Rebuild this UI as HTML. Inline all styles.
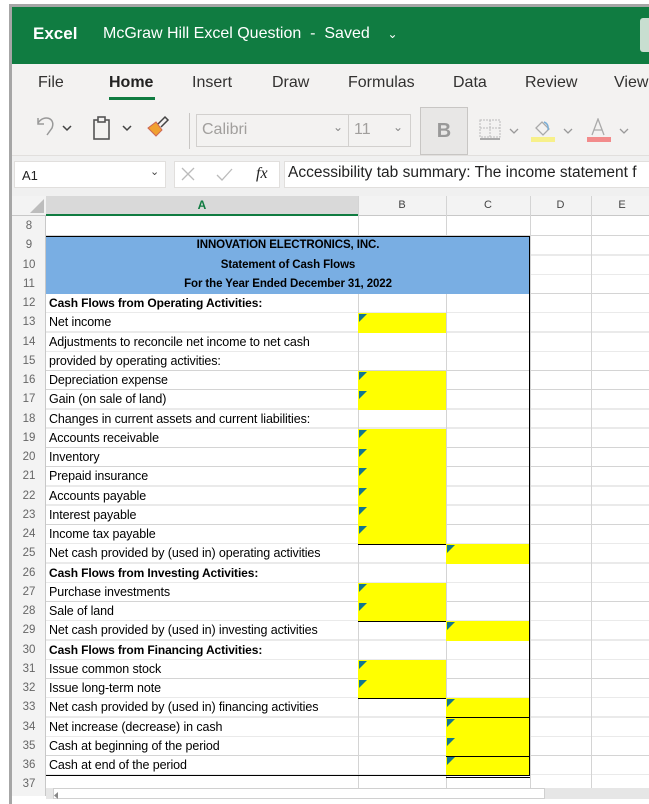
<!DOCTYPE html>
<html><head><meta charset="utf-8"><style>
*{margin:0;padding:0;box-sizing:border-box}
body{width:649px;height:799px;overflow:hidden;background:#fff;position:relative;font-family:"Liberation Sans",sans-serif}
.a{position:absolute}
.frame{left:9px;top:4px;width:650px;height:800px;border-left:3px solid #a6a6a6;border-top:3px solid #a6a6a6}
.green{left:12px;top:7px;width:637px;height:57px;background:#107c41;color:#fff}
.tabs{left:12px;top:64px;width:637px;height:91px;background:#f3f2f1}
.tab{position:absolute;top:74px;font-size:16px;color:#323130}
.fbar{left:12px;top:155px;width:637px;height:41px;background:#f0f0f0;border-top:1px solid #e1dfdd}
.box{position:absolute;background:#fff;border:1px solid #e1dfdd}
.grid{left:12px;top:217px;width:637px;height:578px;background:
 repeating-linear-gradient(to bottom,transparent 0,transparent 18.25px,#d4d4d4 18.25px,#d4d4d4 19.25px)}
.rh{left:12px;top:196px;width:34px;height:600px;background:#f3f3f3;border-right:1px solid #c8c8c8}
.v{position:absolute;top:196px;height:595px;width:1px;background:#d4d4d4}
.ch{position:absolute;top:196px;height:19px;font-size:11px;color:#444;text-align:center;line-height:19px}
.r{position:absolute;top:calc(217px + var(--n)*19.25px);height:19.25px;line-height:19px;font-size:12.5px;color:#000}
.num{left:12px;width:34px;text-align:center;color:#666;font-size:11.5px}
.t{left:49px;white-space:nowrap;letter-spacing:-0.1px}
.b{font-weight:bold}
.y{background:#ff0;height:19.25px}
.B{left:358px;width:88px}
.C{left:446px;width:84px}
.y::before{content:"";position:absolute;left:1px;top:1px;border-top:8px solid #13768f;border-right:8px solid transparent}
.hl{position:absolute;height:1px;background:#000}
</style></head><body>
<div class="a frame"></div>
<div class="a green">
 <div class="a" style="left:21px;top:17px;font-size:17px;font-weight:bold">Excel</div>
 <div class="a" style="left:91px;top:18px;font-size:16px">McGraw Hill Excel Question&nbsp; - &nbsp;Saved &nbsp;&nbsp; <span style="font-size:12px">&#8964;</span></div>
 <div class="a" style="left:628px;top:11px;width:12px;height:34px;background:#c8ded0;border-radius:3px"></div>
</div>
<div class="a tabs"></div>
<div class="tab" style="left:38px">File</div>
<div class="tab" style="left:109px;font-weight:bold;color:#222">Home</div>
<div class="a" style="left:109px;top:97px;width:46px;height:3px;background:#107c41"></div>
<div class="tab" style="left:192px">Insert</div>
<div class="tab" style="left:272px">Draw</div>
<div class="tab" style="left:348px">Formulas</div>
<div class="tab" style="left:453px">Data</div>
<div class="tab" style="left:525px">Review</div>
<div class="tab" style="left:614px">View</div>
<svg class="a" style="left:30px;top:108px" width="180" height="40">
 <path d="M8 10 L8 16 L14 16 M8 15 C14 6 26 10 22 20 L17 27" stroke="#999" stroke-width="1.5" fill="none"/>
 <path d="M33 18 l4 4 l4 -4" stroke="#444" stroke-width="1.5" fill="none"/>
 <rect x="64" y="12" width="15" height="19" stroke="#555" stroke-width="1.6" fill="none"/>
 <rect x="68" y="9" width="7" height="5" stroke="#555" stroke-width="1.6" fill="#f3f2f1"/>
 <path d="M93 18 l4 4 l4 -4" stroke="#444" stroke-width="1.5" fill="none"/>
 <path d="M118 20 l8 -6 l6 8 l-6 6 z" fill="#f0a030" stroke="#c65" stroke-width="1"/>
 <path d="M128 16 l7 -7 l3 3 l-7 7" stroke="#444" stroke-width="1.5" fill="none"/>
</svg>
<div class="a" style="left:189px;top:113px;width:1px;height:36px;background:#c8c6c4"></div>
<div class="a" style="left:196px;top:114px;width:215px;height:33px;border:1px solid #d2d0ce;background:#f3f2f1"></div>
<div class="a" style="left:348px;top:114px;width:1px;height:33px;background:#d2d0ce"></div>
<div class="a" style="left:202px;top:121px;font-size:16px;color:#a19f9d">Calibri</div>
<div class="a" style="left:333px;top:120px;font-size:12px;color:#888">&#8964;</div>
<div class="a" style="left:354px;top:121px;font-size:16px;color:#a19f9d">11</div>
<div class="a" style="left:393px;top:120px;font-size:12px;color:#888">&#8964;</div>
<div class="a" style="left:420px;top:107px;width:48px;height:48px;background:#e8e7e6;border:1px solid #c8c6c4;text-align:center;line-height:46px;font-size:20px;font-weight:bold;color:#999">B</div>
<svg class="a" style="left:476px;top:118px" width="173" height="30">
 <rect x="4" y="2" width="20" height="17" stroke="#bbb" stroke-dasharray="2 1" fill="none"/>
 <path d="M14 2 v17 M4 10 h20" stroke="#bbb" stroke-dasharray="2 1"/>
 <path d="M4 21 h20" stroke="#aaa" stroke-width="2"/>
 <path d="M34 11 l4 4 l4 -4" stroke="#999" stroke-width="1.3" fill="none"/>
 <path d="M60 10 l6 -6 l7 7 l-6 6 z" stroke="#aaa" stroke-width="1.3" fill="none"/>
 <path d="M68 4 q5 2 4 8" stroke="#7aaed6" stroke-width="1.5" fill="none"/>
 <rect x="55" y="19" width="24" height="5" fill="#f7f08a"/>
 <path d="M88 11 l4 4 l4 -4" stroke="#999" stroke-width="1.3" fill="none"/>
 <path d="M116 17 l6 -16 l6 16 M118 12 h8" stroke="#aaa" stroke-width="1.3" fill="none"/>
 <rect x="111" y="19" width="24" height="5" fill="#f28b8b"/>
 <path d="M144 11 l4 4 l4 -4" stroke="#999" stroke-width="1.3" fill="none"/>
</svg>
<div class="a fbar"></div>
<div class="box" style="left:14px;top:161px;width:152px;height:27px"></div>
<div class="a" style="left:22px;top:168px;font-size:13px;color:#222">A1</div>
<div class="a" style="left:150px;top:165px;font-size:11px;color:#444">&#8964;</div>
<div class="box" style="left:174px;top:161px;width:106px;height:27px"></div>
<svg class="a" style="left:180px;top:165px" width="100" height="20">
 <path d="M2 3 l12 12 M14 3 l-12 12" stroke="#bbb" stroke-width="1.3"/>
 <path d="M37 10 l5 5 l10 -11" stroke="#bbb" stroke-width="1.3" fill="none"/>
</svg>
<div class="a" style="left:256px;top:165px;font-size:16px;font-style:italic;font-family:'Liberation Serif',serif;color:#222">fx</div>
<div class="box" style="left:284px;top:161px;width:370px;height:27px"></div>
<div class="a" style="left:288px;top:164px;font-size:15.5px;color:#222;white-space:nowrap">Accessibility tab summary: The income statement f</div>
<div class="a grid"></div>
<div class="a rh"></div>
<div class="a" style="left:12px;top:196px;width:637px;height:20px;background:#f3f3f3;border-bottom:1px solid #c8c8c8"></div>
<div class="a" style="left:46px;top:196px;width:312px;height:20px;background:#d9d9d9;border-bottom:2px solid #107c41"></div>
<svg class="a" style="left:30px;top:199px" width="15" height="15"><path d="M14 0 V14 H0 Z" fill="#bdbdbd"/></svg>
<div class="ch" style="left:46px;width:312px;color:#107c41;font-weight:bold;font-size:12px">A</div>
<div class="ch" style="left:358px;width:88px">B</div>
<div class="ch" style="left:446px;width:84px">C</div>
<div class="ch" style="left:530px;width:61px">D</div>
<div class="ch" style="left:591px;width:62px">E</div>
<div class="v" style="left:358px"></div>
<div class="v" style="left:446px"></div>
<div class="v" style="left:530px"></div>
<div class="v" style="left:591px"></div>
<div class="a" style="left:46px;top:236.25px;width:484px;height:57.75px;background:#79aee3"></div>
<div class="r t b" style="--n:1;left:46px;width:484px;text-align:center;font-size:11.5px">INNOVATION ELECTRONICS, INC.</div>
<div class="r t b" style="--n:2;left:46px;width:484px;text-align:center;font-size:11.5px">Statement of Cash Flows</div>
<div class="r t b" style="--n:3;left:46px;width:484px;text-align:center;font-size:11.5px">For the Year Ended December 31, 2022</div>
<div class="r y B" style="--n:5"></div>
<div class="r y B" style="--n:8"></div><div class="r y B" style="--n:9"></div>
<div class="r y B" style="--n:11"></div><div class="r y B" style="--n:12"></div><div class="r y B" style="--n:13"></div>
<div class="r y B" style="--n:14"></div><div class="r y B" style="--n:15"></div><div class="r y B" style="--n:16"></div>
<div class="r y C" style="--n:17"></div>
<div class="r y B" style="--n:19"></div><div class="r y B" style="--n:20"></div>
<div class="r y C" style="--n:21"></div>
<div class="r y B" style="--n:23"></div><div class="r y B" style="--n:24"></div>
<div class="r y C" style="--n:25"></div><div class="r y C" style="--n:26"></div><div class="r y C" style="--n:27"></div><div class="r y C" style="--n:28"></div>
<div class="a" style="left:46px;top:236px;width:484px;height:1px;background:#000"></div>
<div class="a" style="left:529px;top:236px;width:1.3px;height:539px;background:#000"></div>
<div class="hl" style="left:358px;width:88px;top:544px"></div>
<div class="hl" style="left:358px;width:88px;top:621px"></div>
<div class="hl" style="left:358px;width:88px;top:698px"></div>
<div class="hl" style="left:446px;width:84px;top:717px"></div>
<div class="hl" style="left:446px;width:84px;top:755.5px"></div>
<div class="hl" style="left:46px;width:484px;top:774.5px"></div>
<div class="hl" style="left:446px;width:84px;top:776.5px"></div>
<div class="r num" style="--n:0">8</div><div class="r num" style="--n:1">9</div><div class="r num" style="--n:2">10</div>
<div class="r num" style="--n:3">11</div><div class="r num" style="--n:4">12</div><div class="r num" style="--n:5">13</div>
<div class="r num" style="--n:6">14</div><div class="r num" style="--n:7">15</div><div class="r num" style="--n:8">16</div>
<div class="r num" style="--n:9">17</div><div class="r num" style="--n:10">18</div><div class="r num" style="--n:11">19</div>
<div class="r num" style="--n:12">20</div><div class="r num" style="--n:13">21</div><div class="r num" style="--n:14">22</div>
<div class="r num" style="--n:15">23</div><div class="r num" style="--n:16">24</div><div class="r num" style="--n:17">25</div>
<div class="r num" style="--n:18">26</div><div class="r num" style="--n:19">27</div><div class="r num" style="--n:20">28</div>
<div class="r num" style="--n:21">29</div><div class="r num" style="--n:22">30</div><div class="r num" style="--n:23">31</div>
<div class="r num" style="--n:24">32</div><div class="r num" style="--n:25">33</div><div class="r num" style="--n:26">34</div>
<div class="r num" style="--n:27">35</div><div class="r num" style="--n:28">36</div><div class="r num" style="--n:29">37</div>
<div class="r t b" style="--n:4;font-size:12px">Cash Flows from Operating Activities:</div>
<div class="r t" style="--n:5">Net income</div>
<div class="r t" style="--n:6">Adjustments to reconcile net income to net cash</div>
<div class="r t" style="--n:7">provided by operating activities:</div>
<div class="r t" style="--n:8">Depreciation expense</div>
<div class="r t" style="--n:9">Gain (on sale of land)</div>
<div class="r t" style="--n:10">Changes in current assets and current liabilities:</div>
<div class="r t" style="--n:11">Accounts receivable</div>
<div class="r t" style="--n:12">Inventory</div>
<div class="r t" style="--n:13">Prepaid insurance</div>
<div class="r t" style="--n:14">Accounts payable</div>
<div class="r t" style="--n:15">Interest payable</div>
<div class="r t" style="--n:16">Income tax payable</div>
<div class="r t" style="--n:17">Net cash provided by (used in) operating activities</div>
<div class="r t b" style="--n:18;font-size:12px">Cash Flows from Investing Activities:</div>
<div class="r t" style="--n:19">Purchase investments</div>
<div class="r t" style="--n:20">Sale of land</div>
<div class="r t" style="--n:21">Net cash provided by (used in) investing activities</div>
<div class="r t b" style="--n:22;font-size:12px">Cash Flows from Financing Activities:</div>
<div class="r t" style="--n:23">Issue common stock</div>
<div class="r t" style="--n:24">Issue long-term note</div>
<div class="r t" style="--n:25">Net cash provided by (used in) financing activities</div>
<div class="r t" style="--n:26">Net increase (decrease) in cash</div>
<div class="r t" style="--n:27">Cash at beginning of the period</div>
<div class="r t" style="--n:28">Cash at end of the period</div>
<div class="a" style="left:46px;top:788px;width:603px;height:11px;background:#e6e6e6"></div>
<div class="a" style="left:53px;top:788px;width:492px;height:11px;background:#fff;border:1px solid #d0d0d0"></div>
<svg class="a" style="left:52px;top:791px" width="8" height="8"><path d="M6 1 L2 4.5 L6 8 Z" fill="#888"/></svg>
</body></html>
